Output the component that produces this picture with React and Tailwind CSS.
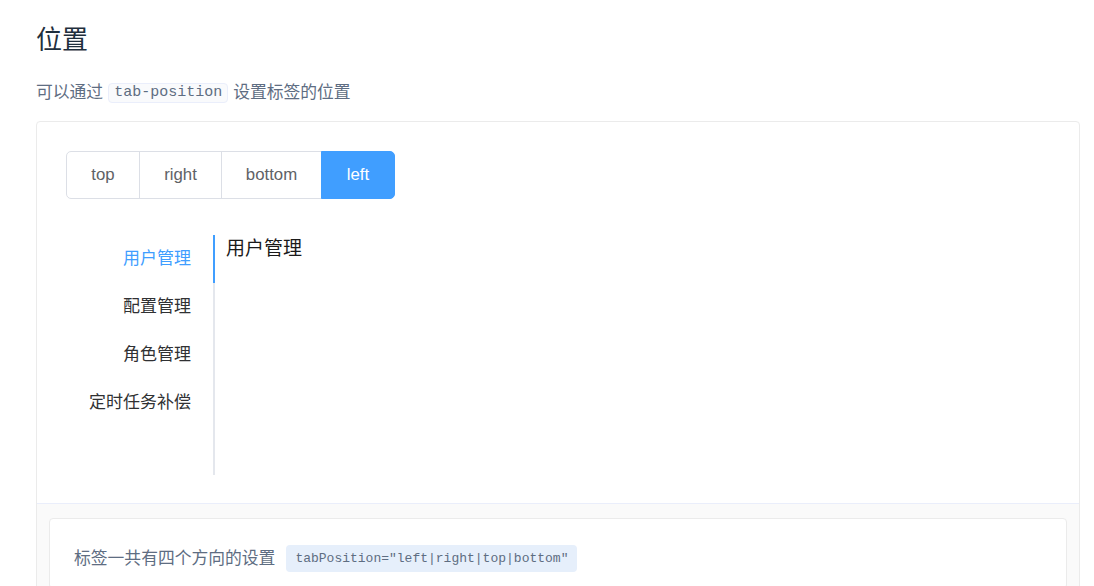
import React, { useState } from "react";

const FONT = { fontFamily: '"Liberation Sans", "Noto Sans CJK SC", sans-serif' };

export default function App() {
  const [pos, setPos] = useState("left");
  const [active, setActive] = useState(0);
  const tabs = ["用户管理", "配置管理", "角色管理", "定时任务补偿"];
  const btns = [
    { k: "top", w: "w-[74px]" },
    { k: "right", w: "w-[83px]" },
    { k: "bottom", w: "w-[101px]" },
    { k: "left", w: "w-[74px]" },
  ];
  return (
    <div className="bg-white min-h-[586px] w-[1094px] pl-[36px] pr-[14px] pt-[24px]" style={FONT}>
      <h3 className="text-[26px] leading-[32px] text-[#1f2f3d] font-normal">位置</h3>
      <p className="mt-[25px] text-[16.8px] leading-[24px] text-[#5e6d82] flex items-center">
        <span>可以通过</span>
        <code
          className="mx-[5px] px-[5px] h-[20px] leading-[18px] text-[15px] bg-[#f9fafc] border border-[#eaeefb] rounded-[4px] text-[#5e6d82]"
          style={{ fontFamily: '"Liberation Mono", monospace' }}
        >
          tab-position
        </code>
        <span>设置标签的位置</span>
      </p>
      <div className="mt-[16px] border border-[#ebebeb] rounded-[4px] w-[1044px]">
        <div className="pt-[29px] px-[29px] pb-[28px]">
          <div className="flex">
            {btns.map((b, i) => {
              const on = pos === b.k;
              return (
                <button
                  key={b.k}
                  onClick={() => setPos(b.k)}
                  className={`${b.w} h-[48px] text-[16.8px] border ${
                    on ? "bg-[#409eff] border-[#409eff] text-white" : "bg-white border-[#dcdfe6] text-[#606266]"
                  } ${i > 0 ? "-ml-px" : ""} ${i === 0 ? "rounded-l-[5px]" : ""} ${
                    i === btns.length - 1 ? "rounded-r-[5px]" : ""
                  }`}
                >
                  {b.k}
                </button>
              );
            })}
          </div>
          <div className="mt-[36px] flex h-[240px]">
            <div className="relative flex flex-col pr-[2px]">
              {tabs.map((t, i) => (
                <div
                  key={t}
                  onClick={() => setActive(i)}
                  className={`h-[48px] leading-[47px] pl-[23px] pr-[22px] text-right text-[17px] cursor-pointer ${
                    active === i ? "text-[#409eff]" : "text-[#303133]"
                  }`}
                >
                  {t}
                </div>
              ))}
              <div className="absolute right-0 top-0 bottom-0 w-[2px] bg-[#e4e7ed]" />
              <div
                className="absolute right-0 w-[2px] h-[48px] bg-[#409eff]"
                style={{ top: active * 48 }}
              />
            </div>
            <div className="ml-[11px] text-[19px] leading-[28px] text-[#1a1a1a]">{tabs[active]}</div>
          </div>
        </div>
        <div className="border-t border-[#eaeefb] bg-[#fafafa] px-[12px] pt-[14px] pb-[20px]">
          <div className="bg-white border border-[#ebebeb] rounded-[4px] pl-[24px] pt-[26px] pb-[16px] flex items-center">
            <span className="text-[16.8px] text-[#5e6d82] leading-[27px]">标签一共有四个方向的设置</span>
            <code
              className="ml-[11px] px-[9px] h-[27px] leading-[27px] text-[13px] bg-[#e6effb] rounded-[4px] text-[#5e6d82]"
              style={{ fontFamily: '"Liberation Mono", monospace' }}
            >
              tabPosition="left|right|top|bottom"
            </code>
          </div>
        </div>
      </div>
    </div>
  );
}
